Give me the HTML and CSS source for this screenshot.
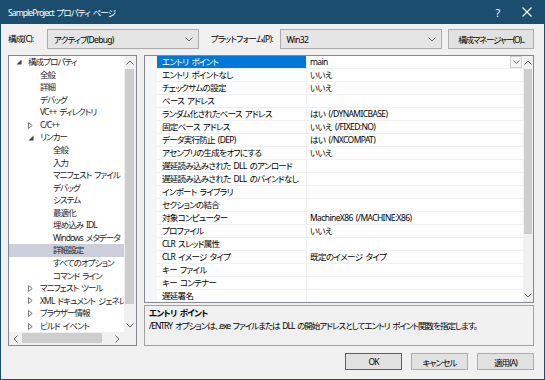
FILE: index.html
```html
<!DOCTYPE html>
<html lang="ja">
<head>
    <meta charset="UTF-8">
    <title>SampleProject プロパティ ページ</title>
    <link rel="stylesheet" href="styles.css">
</head>
<body>
    <div class="window">
        <div class="titlebar">
            <span class="title">SampleProject プロパティ ページ</span>
            <span class="help">?</span>
            <span class="close">
                <svg width="10" height="10" viewBox="0 0 10 10"><path d="M0.5 0.5 L9.5 9.5 M9.5 0.5 L0.5 9.5" stroke="#fff" stroke-width="1.1"/></svg>
            </span>
        </div>

        <div class="body">
            <div class="toolbar">
                <span class="label">構成(C):</span>
                <div class="combo combo-config">
                    <span>アクティブ(Debug)</span>
                    <svg class="chev" width="8" height="5" viewBox="0 0 8 5"><polyline points="0.5,0.5 4,4 7.5,0.5" fill="none" stroke="#606060"/></svg>
                </div>
                <span class="label label-platform">プラットフォーム(P):</span>
                <div class="combo combo-platform">
                    <span>Win32</span>
                    <svg class="chev" width="8" height="5" viewBox="0 0 8 5"><polyline points="0.5,0.5 4,4 7.5,0.5" fill="none" stroke="#606060"/></svg>
                </div>
                <button class="btn btn-manager">構成マネージャー(O)...</button>
            </div>

            <div class="main">
                <div class="tree">
                    <div class="tree-top">
                        <div class="tree-items">
                            <div class="node l0"><span class="exp"><svg width="6" height="6" viewBox="0 0 6 6"><path d="M5.5 0.5 V5.5 H0.5 Z" fill="#404040"/></svg></span>構成プロパティ</div>
                            <div class="node l1"><span class="exp"></span>全般</div>
                            <div class="node l1"><span class="exp"></span>詳細</div>
                            <div class="node l1"><span class="exp"></span>デバッグ</div>
                            <div class="node l1"><span class="exp"></span>VC++ ディレクトリ</div>
                            <div class="node l1"><span class="exp"><svg width="5" height="7" viewBox="0 0 5 7"><path d="M0.5 0.5 L4.2 3.5 L0.5 6.5 Z" fill="none" stroke="#7a7a7a"/></svg></span>C/C++</div>
                            <div class="node l1"><span class="exp"><svg width="6" height="6" viewBox="0 0 6 6"><path d="M5.5 0.5 V5.5 H0.5 Z" fill="#404040"/></svg></span>リンカー</div>
                            <div class="node l2"><span class="exp"></span>全般</div>
                            <div class="node l2"><span class="exp"></span>入力</div>
                            <div class="node l2"><span class="exp"></span>マニフェスト ファイル</div>
                            <div class="node l2"><span class="exp"></span>デバッグ</div>
                            <div class="node l2"><span class="exp"></span>システム</div>
                            <div class="node l2"><span class="exp"></span>最適化</div>
                            <div class="node l2"><span class="exp"></span>埋め込み IDL</div>
                            <div class="node l2"><span class="exp"></span>Windows メタデータ</div>
                            <div class="node l2 selected"><span class="exp"></span>詳細設定</div>
                            <div class="node l2"><span class="exp"></span>すべてのオプション</div>
                            <div class="node l2"><span class="exp"></span>コマンド ライン</div>
                            <div class="node l1"><span class="exp"><svg width="5" height="7" viewBox="0 0 5 7"><path d="M0.5 0.5 L4.2 3.5 L0.5 6.5 Z" fill="none" stroke="#7a7a7a"/></svg></span>マニフェスト ツール</div>
                            <div class="node l1"><span class="exp"><svg width="5" height="7" viewBox="0 0 5 7"><path d="M0.5 0.5 L4.2 3.5 L0.5 6.5 Z" fill="none" stroke="#7a7a7a"/></svg></span>XML ドキュメント ジェネレーター</div>
                            <div class="node l1"><span class="exp"><svg width="5" height="7" viewBox="0 0 5 7"><path d="M0.5 0.5 L4.2 3.5 L0.5 6.5 Z" fill="none" stroke="#7a7a7a"/></svg></span>ブラウザー情報</div>
                            <div class="node l1"><span class="exp"><svg width="5" height="7" viewBox="0 0 5 7"><path d="M0.5 0.5 L4.2 3.5 L0.5 6.5 Z" fill="none" stroke="#7a7a7a"/></svg></span>ビルド イベント</div>
                            <div class="node l1"><span class="exp"><svg width="5" height="7" viewBox="0 0 5 7"><path d="M0.5 0.5 L4.2 3.5 L0.5 6.5 Z" fill="none" stroke="#7a7a7a"/></svg></span>カスタム ビルド ステップ</div>
                        </div>
                        <div class="vscroll tree-vscroll">
                            <div class="arrow"><svg width="8" height="5" viewBox="0 0 8 5"><polyline points="0.5,4.5 4,1 7.5,4.5" fill="none" stroke="#606060"/></svg></div>
                            <div class="track"><div class="thumb"></div></div>
                            <div class="arrow"><svg width="8" height="5" viewBox="0 0 8 5"><polyline points="0.5,0.5 4,4 7.5,0.5" fill="none" stroke="#606060"/></svg></div>
                        </div>
                    </div>
                    <div class="tree-bottom">
                        <div class="hscroll">
                            <div class="arrow"><svg width="5" height="8" viewBox="0 0 5 8"><polyline points="4.5,0.5 1,4 4.5,7.5" fill="none" stroke="#606060"/></svg></div>
                            <div class="track"><div class="thumb"></div></div>
                            <div class="arrow"><svg width="5" height="8" viewBox="0 0 5 8"><polyline points="0.5,0.5 4,4 0.5,7.5" fill="none" stroke="#606060"/></svg></div>
                        </div>
                        <div class="corner"></div>
                    </div>
                </div>

                <div class="right">
                    <div class="grid">
                        <div class="grid-body">
                            <div class="prow selected"><span class="pname">エントリ ポイント</span><span class="pval">main<span class="dd"><svg width="7" height="4" viewBox="0 0 7 4"><polyline points="0.5,0.5 3.5,3.5 6.5,0.5" fill="none" stroke="#707070"/></svg></span></span></div>
                            <div class="prow"><span class="pname">エントリ ポイントなし</span><span class="pval">いいえ</span></div>
                            <div class="prow"><span class="pname">チェックサムの設定</span><span class="pval">いいえ</span></div>
                            <div class="prow"><span class="pname">ベース アドレス</span><span class="pval"></span></div>
                            <div class="prow"><span class="pname">ランダム化されたベース アドレス</span><span class="pval">はい (/DYNAMICBASE)</span></div>
                            <div class="prow"><span class="pname">固定ベース アドレス</span><span class="pval">いいえ (/FIXED:NO)</span></div>
                            <div class="prow"><span class="pname">データ実行防止 (DEP)</span><span class="pval">はい (/NXCOMPAT)</span></div>
                            <div class="prow"><span class="pname">アセンブリの生成をオフにする</span><span class="pval">いいえ</span></div>
                            <div class="prow"><span class="pname">遅延読み込みされた DLL のアンロード</span><span class="pval"></span></div>
                            <div class="prow"><span class="pname">遅延読み込みされた DLL のバインドなし</span><span class="pval"></span></div>
                            <div class="prow"><span class="pname">インポート ライブラリ</span><span class="pval"></span></div>
                            <div class="prow"><span class="pname">セクションの結合</span><span class="pval"></span></div>
                            <div class="prow"><span class="pname">対象コンピューター</span><span class="pval">MachineX86 (/MACHINE:X86)</span></div>
                            <div class="prow"><span class="pname">プロファイル</span><span class="pval">いいえ</span></div>
                            <div class="prow"><span class="pname">CLR スレッド属性</span><span class="pval"></span></div>
                            <div class="prow"><span class="pname">CLR イメージ タイプ</span><span class="pval">既定のイメージ タイプ</span></div>
                            <div class="prow"><span class="pname">キー ファイル</span><span class="pval"></span></div>
                            <div class="prow"><span class="pname">キー コンテナー</span><span class="pval"></span></div>
                            <div class="prow"><span class="pname">遅延署名</span><span class="pval"></span></div>
                        </div>
                        <div class="vscroll grid-vscroll">
                            <div class="arrow"><svg width="8" height="5" viewBox="0 0 8 5"><polyline points="0.5,4.5 4,1 7.5,4.5" fill="none" stroke="#606060"/></svg></div>
                            <div class="track"><div class="thumb"></div></div>
                            <div class="arrow"><svg width="8" height="5" viewBox="0 0 8 5"><polyline points="0.5,0.5 4,4 7.5,0.5" fill="none" stroke="#606060"/></svg></div>
                        </div>
                    </div>
                    <div class="desc">
                        <div class="desc-title">エントリ ポイント</div>
                        <div class="desc-text">/ENTRY オプションは、.exe ファイルまたは DLL の開始アドレスとしてエントリ ポイント関数を指定します。</div>
                    </div>
                </div>
            </div>

            <div class="footer">
                <button class="btn btn-default">OK</button>
                <button class="btn">キャンセル</button>
                <button class="btn">適用(A)</button>
            </div>
        </div>
    </div>
</body>
</html>
```

FILE: styles.css
```css
* {
    margin: 0;
    padding: 0;
    box-sizing: border-box;
}

html, body {
    width: 545px;
    height: 380px;
    overflow: hidden;
    background-color: #f0f0f0;
    font-family: "Noto Sans", "Noto Sans CJK JP", sans-serif;
    font-feature-settings: "palt";
    font-size: 8.5px;
    letter-spacing: -0.7px;
    word-spacing: 1.5px;
    color: #000;
}

.window {
    width: 545px;
    height: 380px;
    border: 1px solid #1b4e6e;
    border-top: none;
    display: flex;
    flex-direction: column;
}

/* タイトルバー */
.titlebar {
    height: 24px;
    margin: 0 -1px;
    background-color: #1b4e6e;
    color: #fff;
    display: flex;
    align-items: center;
    padding-left: 8px;
    font-size: 8.5px;
    letter-spacing: -0.9px;
}

.title {
    flex: 1;
    white-space: nowrap;
}

.help {
    width: 12px;
    font-size: 11px;
    letter-spacing: 0;
    margin-right: 18px;
    text-align: center;
}

.close {
    display: flex;
    width: 10px;
    margin-right: 13px;
}

.body {
    flex: 1;
    padding: 5px 10px 9px 7px;
    display: flex;
    flex-direction: column;
}

/* 上部のツールバー */
.toolbar {
    height: 20px;
    display: flex;
    align-items: center;
    white-space: nowrap;
}

.label {
    width: 39px;
    line-height: 20px;
}

.label-platform {
    width: 69px;
    margin-left: 12px;
}

.combo {
    height: 20px;
    background-color: #e5e5e5;
    border: 1px solid #acacac;
    display: flex;
    align-items: center;
    justify-content: space-between;
    padding: 0 5px 0 6px;
}

.combo-config {
    width: 152px;
}

.combo-platform {
    width: 163px;
}

.chev {
    display: block;
}

.btn {
    height: 20px;
    background-color: #e1e1e1;
    border: 1px solid #adadad;
    font-family: inherit;
    font-size: 8.5px;
    font-feature-settings: "palt";
    letter-spacing: -0.9px;
    white-space: nowrap;
    color: #000;
}

.btn-manager {
    width: 86px;
    margin-left: 6px;
    letter-spacing: -1.2px;
}

.main {
    height: 291px;
    margin-top: 6px;
    display: flex;
    gap: 7px;
}

/* 左のツリー */
.tree {
    width: 129px;
    background-color: #fff;
    border: 1px solid #828790;
    display: flex;
    flex-direction: column;
}

.tree-top {
    flex: 1;
    display: flex;
    overflow: hidden;
}

.tree-items {
    flex: 1;
    overflow: hidden;
    color: #1e1e1e;
    letter-spacing: -0.9px;
}

.node {
    height: 12.57px;
    line-height: 12.57px;
    white-space: nowrap;
    display: flex;
    align-items: center;
}

.node.l0 { padding-left: 7px; }
.node.l1 { padding-left: 19px; }
.node.l2 { padding-left: 32px; }

.node.selected {
    background-color: #cccedb;
}

.exp {
    width: 12px;
    flex-shrink: 0;
    display: flex;
    align-items: center;
}

.exp svg {
    display: block;
}

.vscroll {
    width: 12px;
    background-color: #f0f0f0;
    display: flex;
    flex-direction: column;
}

.vscroll .arrow {
    height: 13px;
    display: flex;
    align-items: center;
    justify-content: center;
}

.vscroll .track {
    flex: 1;
    padding: 0 2px 0 1px;
}

.vscroll .thumb {
    background-color: #cdcdcd;
    width: 100%;
}

.tree-vscroll .thumb {
    height: 235px;
}

.tree-bottom {
    height: 13px;
    display: flex;
}

.hscroll {
    flex: 1;
    background-color: #f0f0f0;
    display: flex;
}

.hscroll .arrow {
    width: 13px;
    display: flex;
    align-items: center;
    justify-content: center;
}

.hscroll .track {
    flex: 1;
    padding: 1px 0 2px;
}

.hscroll .thumb {
    width: 80px;
    height: 100%;
    background-color: #cdcdcd;
}

.corner {
    width: 12px;
    background-color: #f0f0f0;
}

/* 右のプロパティ グリッド */
.right {
    flex: 1;
    display: flex;
    flex-direction: column;
    gap: 2px;
}

.grid {
    height: 248px;
    background-color: #fff;
    border: 1px solid #828790;
    display: flex;
}

.grid-body {
    flex: 1;
    overflow: hidden;
    padding-left: 12px;
    background-color: #f3f6fb;
}

.prow {
    height: 13px;
    display: grid;
    grid-template-columns: 150px 1fr;
    background-color: #fff;
    border-bottom: 1px solid #eef0f4;
    line-height: 12px;
    white-space: nowrap;
}

.pname {
    padding-left: 5px;
    border-right: 1px solid #eef0f4;
    overflow: hidden;
}

.pval {
    padding-left: 3px;
    position: relative;
    letter-spacing: -0.6px;
}

.prow.selected .pname {
    background-color: #0078d7;
    color: #fff;
}

.dd {
    position: absolute;
    right: 1px;
    top: 0;
    width: 12px;
    height: 12px;
    border: 1px solid #cfcfcf;
    background-color: #f4f4f4;
    display: flex;
    align-items: center;
    justify-content: center;
}

.grid-vscroll {
    width: 10px;
}

.grid-vscroll .track {
    padding: 0 1px;
}

.grid-vscroll .thumb {
    height: 165px;
}

.desc {
    flex: 1;
    border: 1px solid #a0a0a0;
    padding: 0 4px;
    line-height: 13px;
}

.desc-title {
    font-weight: bold;
}

.desc-text {
    letter-spacing: -1px;
    white-space: nowrap;
}

.footer {
    height: 17px;
    margin-top: 7px;
    display: flex;
    justify-content: flex-end;
    gap: 9px;
}

.footer .btn {
    width: 57px;
    height: 17px;
}

.btn-default {
    border-color: #0078d7;
}
```
